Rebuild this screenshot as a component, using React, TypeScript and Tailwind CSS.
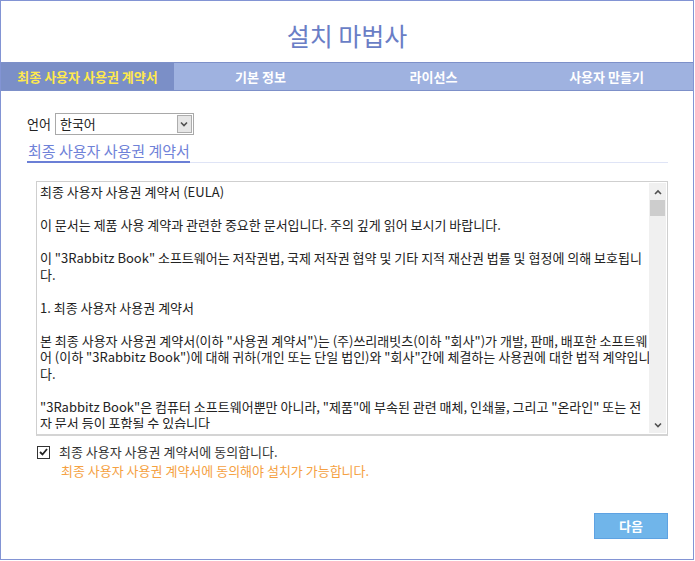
import React, { useState } from 'react';

const tabs = ['최종 사용자 사용권 계약서', '기본 정보', '라이선스', '사용자 만들기'];

// each paragraph is given as its wrapped lines so the breaks match the original control
const eula: string[][] = [
    ['최종 사용자 사용권 계약서 (EULA)'],
    ['이 문서는 제품 사용 계약과 관련한 중요한 문서입니다. 주의 깊게 읽어 보시기 바랍니다.'],
    ['이 "3Rabbitz Book" 소프트웨어는 저작권법, 국제 저작권 협약 및 기타 지적 재산권 법률 및 협정에 의해 보호됩니', '다.'],
    ['1. 최종 사용자 사용권 계약서'],
    [
        '본 최종 사용자 사용권 계약서(이하 "사용권 계약서")는 (주)쓰리래빗츠(이하 "회사")가 개발, 판매, 배포한 소프트웨',
        '어 (이하 "3Rabbitz Book")에 대해 귀하(개인 또는 단일 법인)와 "회사"간에 체결하는 사용권에 대한 법적 계약입니',
        '다.',
    ],
    [
        '"3Rabbitz Book"은 컴퓨터 소프트웨어뿐만 아니라, "제품"에 부속된 관련 매체, 인쇄물, 그리고 "온라인" 또는 전',
        '자 문서 등이 포함될 수 있습니다',
    ],
];

const Chevron: React.FC<{ up?: boolean }> = ({ up }) => (
    <svg width="8" height="6" viewBox="0 0 8 6" className="block">
        <path
            d={up ? 'M1 5 L4 2 L7 5' : 'M1 1.5 L4 4.5 L7 1.5'}
            fill="none"
            stroke="#505050"
            strokeWidth="1.6"
        />
    </svg>
);

const App: React.FC = () => {
    const [agreed, setAgreed] = useState(true);

    return (
        <div className="h-[561px] w-[695px] bg-white font-['Noto_Sans_CJK_KR',sans-serif] text-[13px] text-[#222]">
            <div className="flex h-[560px] w-[694px] flex-col border border-[#8294d4]">
                {/* header */}
                <div className="flex h-[61px] justify-center pt-[19px]">
                    <h1 className="text-[25px] leading-[30px] text-[#6a7ec6]">설치 마법사</h1>
                </div>

                {/* steps */}
                <div className="flex h-[29px] border-y border-[#7d90c9] bg-[#9fb2e0]">
                    {tabs.map((t, i) => (
                        <div
                            key={t}
                            className={`flex flex-1 items-center justify-center text-[13px] font-bold ${
                                i === 0 ? 'bg-[#7b8fc7] text-[#ffe94d]' : 'text-white'
                            }`}
                        >
                            {t}
                        </div>
                    ))}
                </div>

                <div className="flex flex-1 flex-col pl-[26px] pr-[25px]">
                    {/* language */}
                    <div className="mt-[22px] flex items-center gap-[4px]">
                        <span className="leading-[16px]">언어</span>
                        <div className="flex h-[22px] w-[139px] items-center border border-[#a9a9a9] bg-white">
                            <span className="flex-1 pl-[4px] leading-[16px]">한국어</span>
                            <div className="mr-[1px] flex h-[18px] w-[15px] items-center justify-center border border-[#adadad] bg-[#e6e6e6]">
                                <Chevron />
                            </div>
                        </div>
                    </div>

                    {/* section heading */}
                    <div className="mt-[6px] flex border-b border-[#dfe4f6]">
                        <div className="-mb-px border-b-2 border-[#6b7fd6] pb-0 pl-px text-[15px] leading-[20px] text-[#6f82d8]">
                            최종 사용자 사용권 계약서
                        </div>
                    </div>

                    {/* agreement text */}
                    <div className="ml-[9px] mt-[18px] flex h-[255px] border border-[#cfcfcf] border-b-2 border-b-[#d4d4d4]">
                        <div className="h-[247px] flex-1 overflow-hidden pl-[3px] pt-[2px] leading-[16.5px]">
                            {eula.map((p, i) => (
                                <div key={i} className="mb-[16.5px]">
                                    {p.map((line, j) => (
                                        <div key={j} className="whitespace-nowrap">
                                            {line}
                                        </div>
                                    ))}
                                </div>
                            ))}
                        </div>
                        <div className="my-[1px] mr-[1px] flex w-[17px] flex-col bg-[#f0f0f0]">
                            <div className="flex h-[17px] items-center justify-center">
                                <Chevron up />
                            </div>
                            <div className="mx-[1px] h-[16px] bg-[#cdcdcd]" />
                            <div className="flex-1" />
                            <div className="flex h-[17px] items-center justify-center">
                                <Chevron />
                            </div>
                        </div>
                    </div>

                    {/* consent */}
                    <label className="ml-[10px] mt-[8px] flex cursor-pointer items-center gap-[9px]">
                        <span className="flex h-[13px] w-[13px] items-center justify-center border border-[#333] bg-white">
                            {agreed && (
                                <svg width="9" height="8" viewBox="0 0 9 8">
                                    <path d="M1 4 L3.5 6.5 L8 1" fill="none" stroke="#222" strokeWidth="1.8" />
                                </svg>
                            )}
                        </span>
                        <input
                            type="checkbox"
                            className="hidden"
                            checked={agreed}
                            onChange={() => setAgreed(!agreed)}
                        />
                        <span className="leading-[16px] text-[#333]">최종 사용자 사용권 계약서에 동의합니다.</span>
                    </label>
                    <div className="ml-[34px] mt-[3px] leading-[16px] text-[#f5a142]">
                        최종 사용자 사용권 계약서에 동의해야 설치가 가능합니다.
                    </div>

                    {/* footer */}
                    <div className="mb-[20px] mt-auto flex justify-end">
                        <button
                            type="button"
                            className="h-[26px] w-[74px] border border-[#5ea2e2] bg-[#70b5ea] text-[13px] font-bold text-white"
                        >
                            다음
                        </button>
                    </div>
                </div>
            </div>
        </div>
    );
};

export default App;
